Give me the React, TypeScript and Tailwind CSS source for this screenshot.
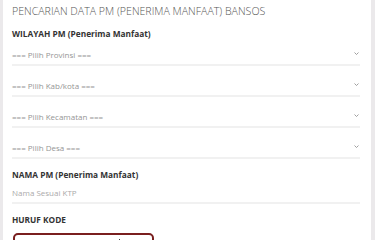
import React from 'react';

const selects = ['=== Pilih Provinsi ===', '=== Pilih Kab/kota ===', '=== Pilih Kecamatan ===', '=== Pilih Desa ==='];

const Chevron = () => (
    <svg viewBox="0 0 10 6" className="w-[5px] h-[3px] mb-[6px]" fill="none" stroke="#888" strokeWidth="1.6">
        <path d="M1 1l4 4 4-4" />
    </svg>
);

export default function App() {
    return (
        <div className="w-[375px] h-[240px] overflow-hidden bg-[#ebe9eb] pl-[3px] pr-[4px] font-['Open_Sans',sans-serif]">
            <div className="bg-white h-full pl-[9px] pr-[11px] pt-[3px]">
                <h1 className="text-[10.6px] font-light text-[#555] leading-[16px]">PENCARIAN DATA PM (PENERIMA MANFAAT) BANSOS</h1>

                <p className="mt-[9px] text-[8.3px] font-bold text-[#333] leading-[12px]">WILAYAH PM (Penerima Manfaat)</p>

                <div className="mt-[-5px]">
                    {selects.map((s) => (
                        <div key={s} className="flex items-end justify-between h-[31px] pb-[3px] border-b-2 border-[#f1f1f1] pr-[1px]">
                            <span className="text-[8px] text-[#959595] leading-[12px]">{s}</span>
                            <Chevron />
                        </div>
                    ))}
                </div>

                <p className="mt-[10px] text-[8.3px] font-bold text-[#333] leading-[12px]">NAMA PM (Penerima Manfaat)</p>
                <div className="h-[23px] flex items-end pb-[3px] border-b-2 border-[#f1f1f1]">
                    <span className="text-[8px] text-[#aaa] leading-[12px]">Nama Sesuai KTP</span>
                </div>

                <p className="mt-[10px] text-[8.3px] font-bold text-[#333] leading-[12px]">HURUF KODE</p>
                {/* captcha box, image is cut off by the viewport */}
                <div className="mt-[7px] ml-[1px] w-[141px] h-[30px] border-2 border-[#7a1f1f] rounded-[5px] pl-[104px] pt-[4px]">
                    <div className="w-[1px] h-[3px] bg-[#444]"></div>
                </div>
            </div>
        </div>
    );
}
